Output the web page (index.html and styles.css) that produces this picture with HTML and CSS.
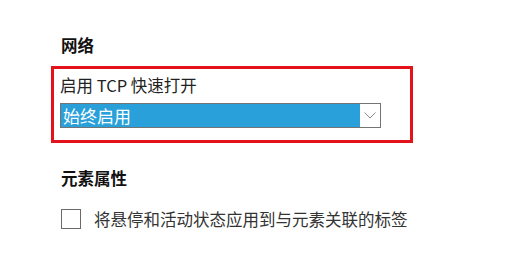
FILE: index.html
```html
<!DOCTYPE html>
<html lang="zh-CN">
<head>
  <meta charset="UTF-8">
  <meta name="viewport" content="width=device-width, initial-scale=1">
  <title>设置</title>
  <link rel="stylesheet" href="styles.css">
</head>
<body>

  <div class="page">
    <h2 class="section-title">网络</h2>

    <div class="highlight-box">
      <div class="field-label">启用 TCP 快速打开</div>
      <div class="dropdown">
        <div class="dropdown-value">始终启用</div>
        <div class="dropdown-arrow">
          <svg width="12" height="7" viewBox="0 0 12 7">
            <polyline points="0.5,0.5 6,6 11.5,0.5" fill="none" stroke="#8a8a8a" stroke-width="1"/>
          </svg>
        </div>
      </div>
    </div>

    <h2 class="section-title second">元素属性</h2>

    <label class="check-row">
      <span class="checkbox"></span>
      <span class="check-text">将悬停和活动状态应用到与元素关联的标签</span>
    </label>
  </div>

</body>
</html>
```

FILE: styles.css
```css
body {
  margin: 0;
  background: #fff;
  color: #1b1b1b;
  font-family: "Noto Sans CJK SC", "Noto Sans", sans-serif;
}
.page {
  padding: 33px 0 0 51px;
}
.section-title {
  margin: 0;
  padding-left: 10px;
  font-size: 16.5px;
  line-height: 24px;
  font-weight: bold;
  color: #111;
}
.section-title.second {
  margin-top: 23px;
}
.highlight-box {
  width: 344px;
  margin-top: 9px;
  padding: 4px 6px 12px 6px;
  border: 3px solid #e3121b;
}
.field-label {
  font-size: 16.5px;
  line-height: 24px;
  color: #222;
}
.dropdown {
  display: flex;
  width: 319px;
  height: 23px;
  margin-top: 6px;
  border: 1px solid #747474;
}
.dropdown-value {
  flex: 1;
  background: #29a0da;
  color: #fff;
  font-size: 17px;
  line-height: 23px;
  padding-left: 2px;
}
.dropdown-arrow {
  width: 20px;
  display: flex;
  align-items: center;
  justify-content: center;
  background: #fff;
}
.dropdown-arrow svg {
  display: block;
}
.check-row {
  display: flex;
  align-items: center;
  margin-top: 17px;
  padding-left: 10px;
}
.checkbox {
  width: 18px;
  height: 18px;
  border: 1.5px solid #6a6a6a;
  box-sizing: content-box;
}
.check-text {
  margin-left: 13px;
  font-size: 16.5px;
  line-height: 24px;
  color: #333;
}
```
